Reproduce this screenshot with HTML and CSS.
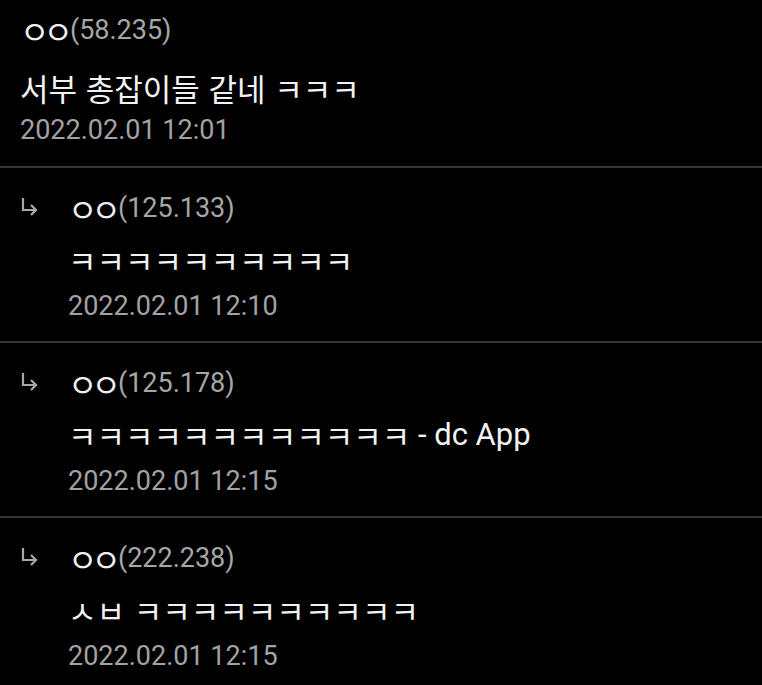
FILE: index.html
```html
<!DOCTYPE html>
<html lang="ko">
<head>
<meta charset="UTF-8">
<meta name="viewport" content="width=device-width, initial-scale=1.0">
<title>댓글</title>
<link rel="stylesheet" href="styles.css">
</head>
<body>
    <ul class="comments">
        <li class="comment">
            <div class="author"><span class="nick ko">ㅇㅇ</span><span class="ip">(58.235)</span></div>
            <div class="text"><span class="ko">서부 총잡이들 같네 ㅋㅋㅋ</span></div>
            <div class="date">2022.02.01 12:01</div>
        </li>

        <li class="comment reply">
            <svg class="arrow" width="20" height="22" viewBox="0 0 20 22">
                <path d="M3 2 V14 H16 M11 9 L16 14 L11 19" fill="none" stroke="#a8a8a8" stroke-width="2.2"/>
            </svg>
            <div class="body">
                <div class="author"><span class="nick ko">ㅇㅇ</span><span class="ip">(125.133)</span></div>
                <div class="text"><span class="ko">ㅋㅋㅋㅋㅋㅋㅋㅋㅋㅋ</span></div>
                <div class="date">2022.02.01 12:10</div>
            </div>
        </li>

        <li class="comment reply">
            <svg class="arrow" width="20" height="22" viewBox="0 0 20 22">
                <path d="M3 2 V14 H16 M11 9 L16 14 L11 19" fill="none" stroke="#a8a8a8" stroke-width="2.2"/>
            </svg>
            <div class="body">
                <div class="author"><span class="nick ko">ㅇㅇ</span><span class="ip">(125.178)</span></div>
                <div class="text"><span class="ko">ㅋㅋㅋㅋㅋㅋㅋㅋㅋㅋㅋㅋ</span> - dc App</div>
                <div class="date">2022.02.01 12:15</div>
            </div>
        </li>

        <li class="comment reply">
            <svg class="arrow" width="20" height="22" viewBox="0 0 20 22">
                <path d="M3 2 V14 H16 M11 9 L16 14 L11 19" fill="none" stroke="#a8a8a8" stroke-width="2.2"/>
            </svg>
            <div class="body">
                <div class="author"><span class="nick ko">ㅇㅇ</span><span class="ip">(222.238)</span></div>
                <div class="text"><span class="ko">ㅅㅂ ㅋㅋㅋㅋㅋㅋㅋㅋㅋㅋ</span></div>
                <div class="date">2022.02.01 12:15</div>
            </div>
        </li>
    </ul>
</body>
</html>
```

FILE: styles.css
```css
body {
    margin: 0;
    background: #000;
    font-family: Roboto, "Noto Sans CJK KR", sans-serif;
    font-size: 27px;
    color: #ececec;
}
.comments {
    list-style: none;
    margin: 0;
    padding: 0;
}
.comment {
    padding: 18px 20px 13px;
    border-top: 2px solid #363636;
}
.comment:first-child {
    border-top: none;
    padding-top: 8px;
    padding-bottom: 14px;
}
.reply {
    display: flex;
    gap: 28px;
}
.arrow {
    margin-top: 10px;
    flex-shrink: 0;
}
.author, .text, .date {
    height: 44px;
    line-height: 44px;
    white-space: nowrap;
}
.ko {
    font-family: "Noto Sans CJK KR", sans-serif;
    vertical-align: top;
}
.nick {
    color: #f0f0f0;
    font-size: 32px;
    letter-spacing: -6px;
    margin-right: 3px;
}
.ip {
    color: #a6a6a6;
}
.text {
    margin-top: 8px;
    font-size: 31px;
    color: #f2f2f2;
}
.comment:first-child .text {
    margin-top: 14px;
}
.date {
    margin-top: 2px;
    color: #a2a2a2;
}
.comment:first-child .date {
    margin-top: -2px;
}
```
